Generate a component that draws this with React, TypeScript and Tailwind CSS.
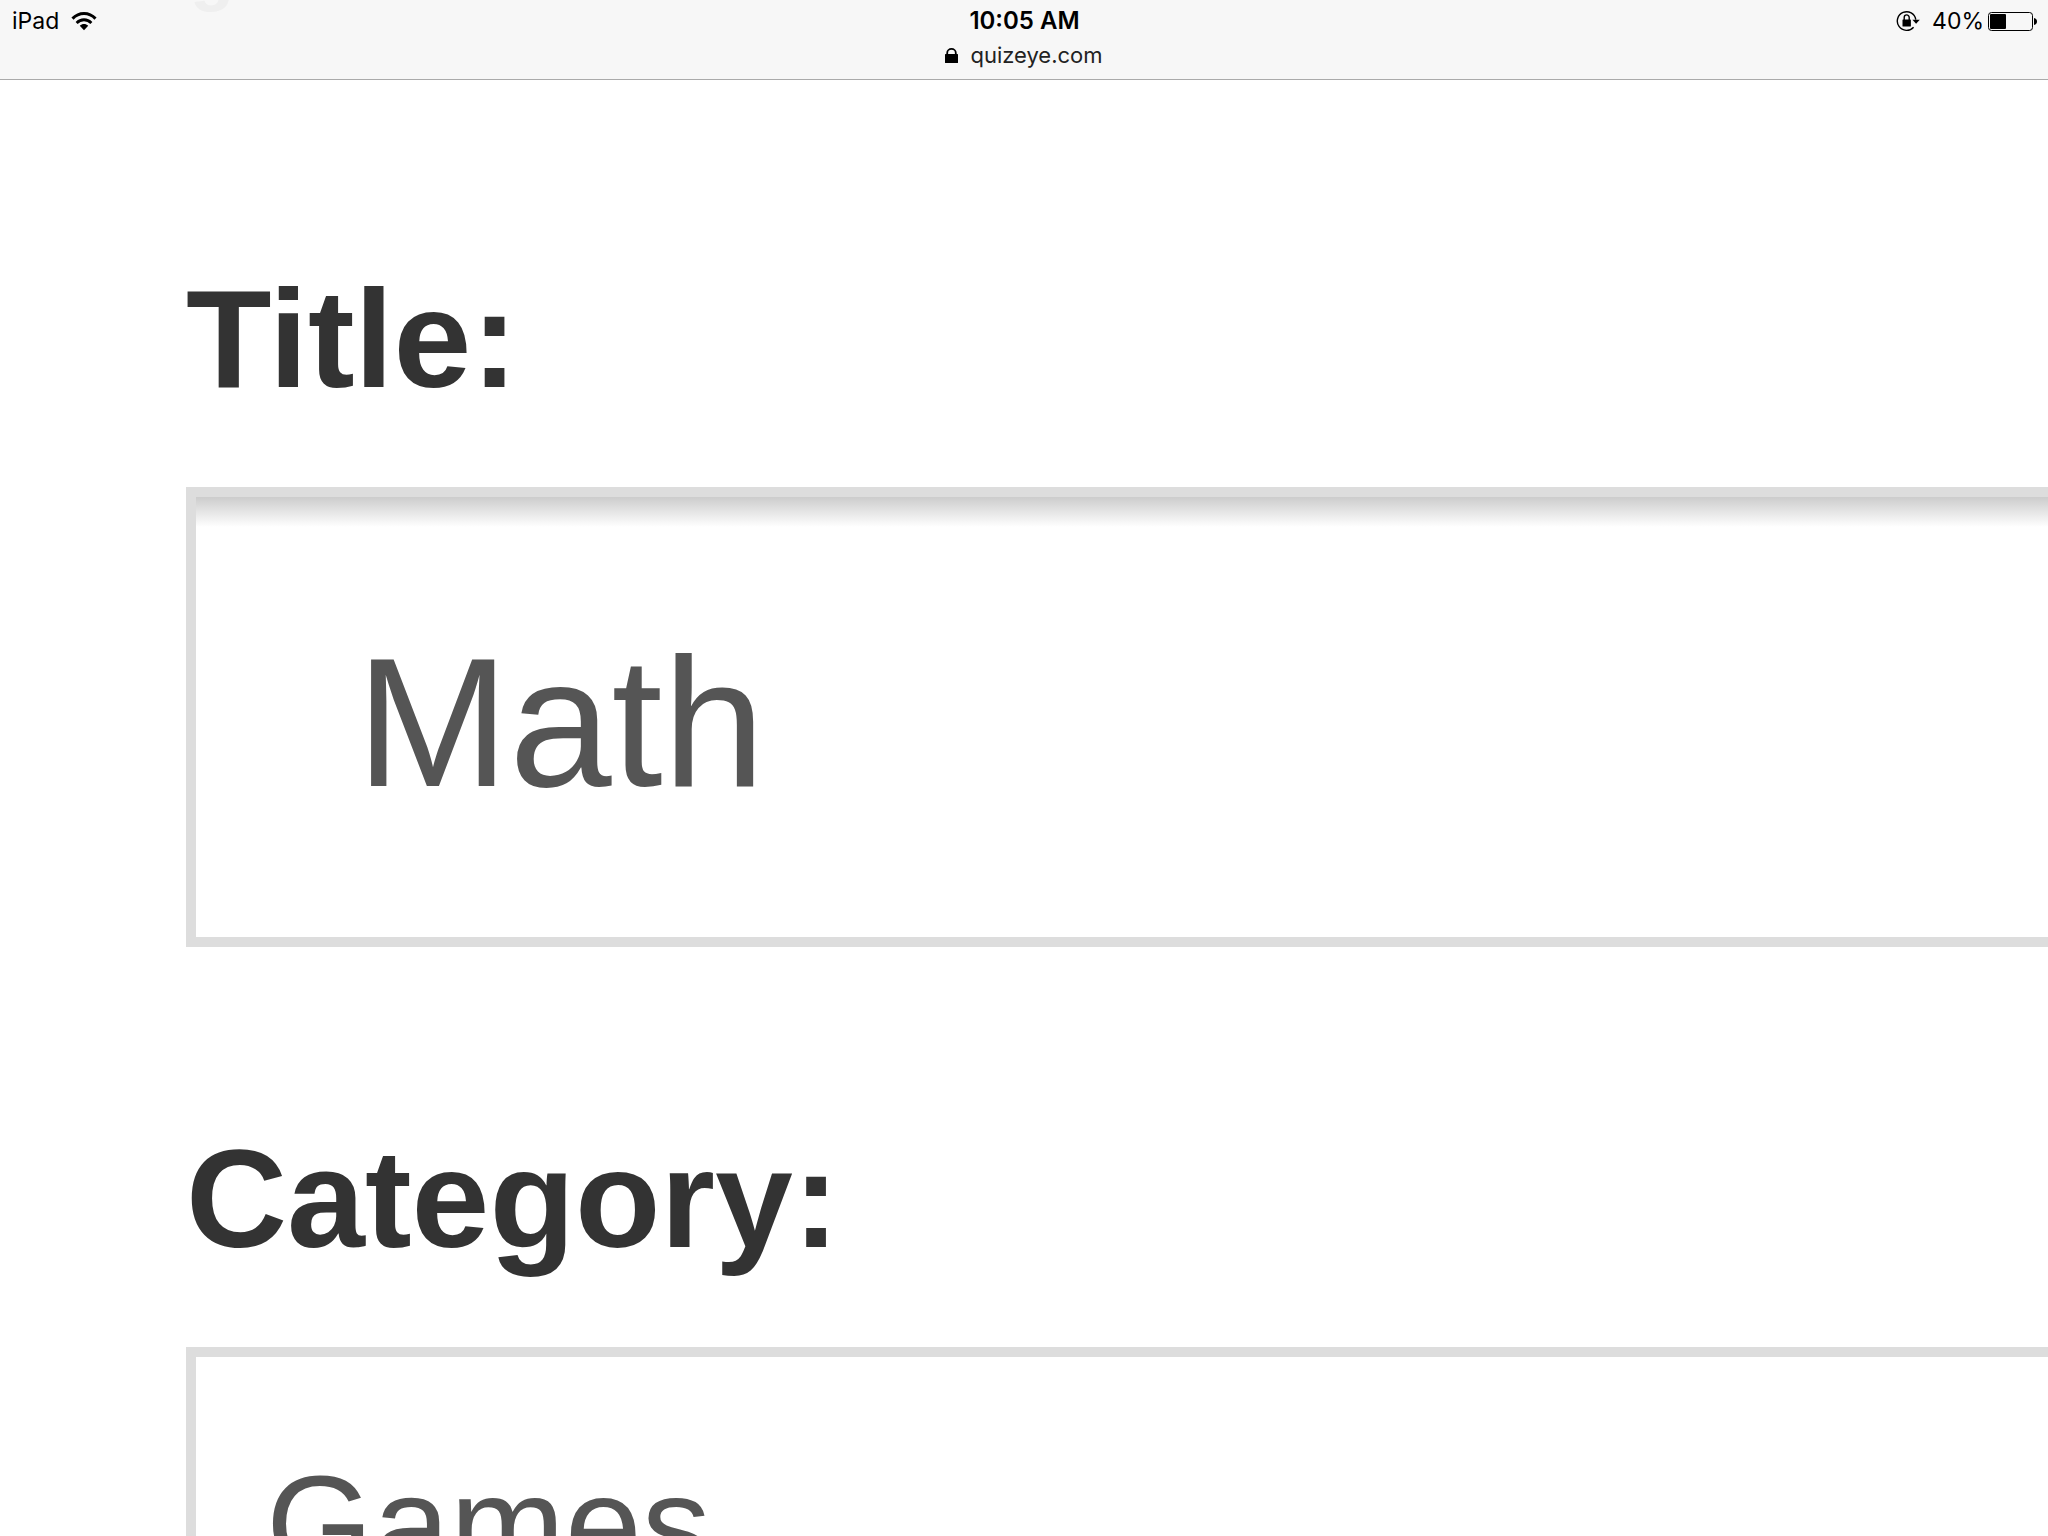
import React from "react";

function WifiIcon() {
  return (
    <svg width="26" height="19" viewBox="0 0 26 19" aria-hidden="true">
      <path d="M1.5 6.6C8-.2 18-.2 24.5 6.6" fill="none" stroke="#000" strokeWidth="3" />
      <path d="M5.6 10.9C9.8 6.7 16.2 6.7 20.4 10.9" fill="none" stroke="#000" strokeWidth="2.8" />
      <path d="M13 18.2L8.8 13.8C11.2 11.5 14.8 11.5 17.2 13.8Z" />
    </svg>
  );
}

function RotationLockIcon() {
  return (
    <svg width="24" height="22" viewBox="0 0 24 22" aria-hidden="true">
      <path d="M19.8 9.6A9.3 9.3 0 1 0 17.6 17.2" fill="none" stroke="#000" strokeWidth="1.4" />
      <path d="M16.4 9.8H23.8L20.1 13.8Z" />
      <rect x="6.5" y="9.5" width="8.4" height="7" rx="0.5" />
      <path d="M8.2 10V7.4a2.5 2.5 0 0 1 5 0V10" fill="none" stroke="#000" strokeWidth="1.4" />
    </svg>
  );
}

function BatteryIcon() {
  return (
    <svg width="49" height="19" viewBox="0 0 49 19" aria-hidden="true">
      <rect x="0.5" y="0.5" width="44" height="18" rx="3" fill="none" stroke="#000" />
      <rect x="2" y="2" width="16" height="15" rx="1" />
      <path d="M46 6C48 6.5 49 7.5 49 9.5S48 12.5 46 13Z" />
    </svg>
  );
}

function PadlockIcon() {
  return (
    <svg width="13" height="15" viewBox="0 0 13 15" aria-hidden="true">
      <rect y="6" width="13" height="9" rx="0.5" />
      <path d="M2.2 7V4.9a4.3 4 0 0 1 8.6 0V7" fill="none" stroke="#000" strokeWidth="1.8" />
    </svg>
  );
}

function BrowserBar() {
  return (
    <header className="relative h-20 overflow-hidden border-b border-[#aaa] bg-[#f7f7f7] font-['Inter',sans-serif] text-black">
      <span
        aria-hidden="true"
        className="absolute bottom-[71px] left-[190px] font-['Liberation_Sans',sans-serif] text-[72px] leading-[72px] font-bold text-[#efefef]"
      >
        g
      </span>
      <div className="relative grid h-[42px] grid-cols-3 items-center pr-[11px] pl-3 text-[23px] leading-10">
        <div className="flex items-center gap-3">
          <span>iPad</span>
          <WifiIcon />
        </div>
        <time className="text-center text-[24px] font-semibold">10:05 AM</time>
        <div className="flex items-center justify-end">
          <RotationLockIcon />
          <span className="mr-1 ml-3">40%</span>
          <BatteryIcon />
        </div>
      </div>
      <div className="relative flex items-center justify-center gap-3 text-[22px] leading-[26px] text-[#222]">
        <PadlockIcon />
        <span>quizeye.com</span>
      </div>
    </header>
  );
}

const labelClass = "block text-[140px] leading-[200px] font-bold text-[#333]";

export default function App() {
  return (
    <div className="h-screen overflow-hidden bg-white">
      <BrowserBar />
      <form className="flex flex-col gap-[152px] pt-[159px] pl-[186px] font-['Liberation_Sans',sans-serif]">
        <div className="flex flex-col gap-12">
          <label htmlFor="title" className={labelClass}>
            Title:
          </label>
          <input
            id="title"
            type="text"
            defaultValue="Math"
            className="h-[460px] w-full border-10 border-r-0 border-[#ddd] bg-[linear-gradient(#ccc,#fff_30px)] bg-origin-padding px-40 pt-[10px] text-[184px] text-[#555] outline-none"
          />
        </div>
        <div className="flex flex-col gap-12">
          <label htmlFor="category" className={labelClass}>
            Category:
          </label>
          <select
            id="category"
            className="h-[354px] w-full appearance-none border-10 border-r-0 border-[#ddd] bg-white px-[70px] text-[138px] text-[#555] outline-none"
          >
            <option>Games</option>
          </select>
        </div>
      </form>
    </div>
  );
}
